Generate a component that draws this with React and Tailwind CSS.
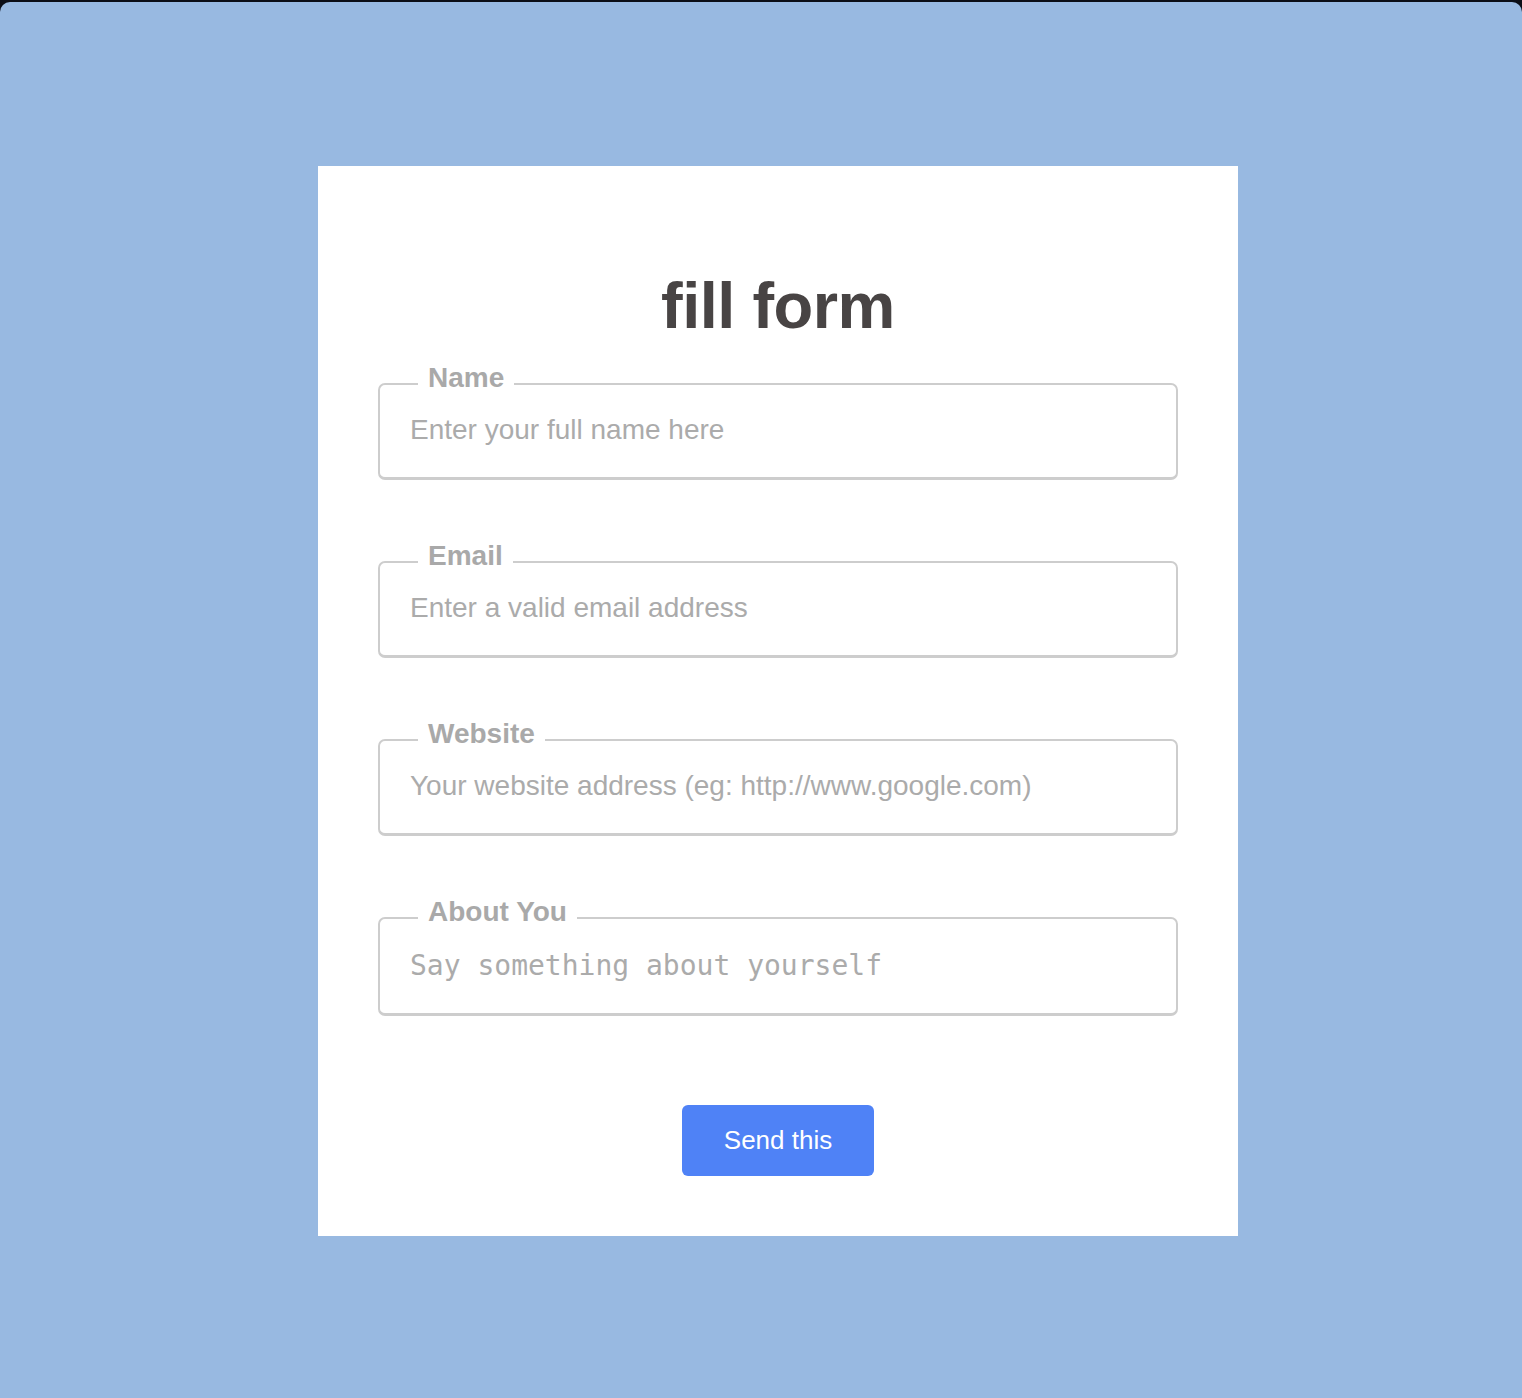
import React from 'react';

const fields = [
  { label: 'Name', placeholder: 'Enter your full name here', type: 'text' },
  { label: 'Email', placeholder: 'Enter a valid email address', type: 'email' },
  { label: 'Website', placeholder: 'Your website address (eg: http://www.google.com)', type: 'url' },
];

const Field = ({ label, children, last }) => (
  <fieldset
    className={`border-2 border-b-[3px] border-[#cdcdcd] rounded-[7px] px-[30px] pb-[18px] ${last ? '' : 'mb-[67px]'}`}
  >
    <legend className="ml-[8px] px-[10px] text-[28px] leading-[30px] font-bold text-[#a9a9a9]">
      <span className="relative -top-[6px]">{label}</span>
    </legend>
    {children}
  </fieldset>
);

const App = () => {
  return (
    <div className="h-[1398px] bg-[#0b0e16] pt-[2px] font-['Liberation_Sans',Arial,sans-serif]">
      <div className="h-[1396px] bg-[#98b9e1] rounded-t-[10px] pt-[164px] pl-[318px]">
        <div className="w-[920px] h-[1070px] bg-white px-[60px] pt-[104px]">
          <h1 className="text-center text-[65px] leading-[72px] font-bold text-[#484444] tracking-[-0.5px] mb-[27px]">
            fill form
          </h1>
          <form onSubmit={(e) => e.preventDefault()}>
            {fields.map((f) => (
              <Field key={f.label} label={f.label}>
                <input
                  type={f.type}
                  placeholder={f.placeholder}
                  className="mt-[2px] block w-full h-[58px] text-[28px] text-[#555] placeholder:text-[#ababab] outline-none bg-transparent"
                />
              </Field>
            ))}
            <Field label="About You" last>
              <textarea
                rows={1}
                placeholder="Say something about yourself"
                className="mt-[2px] block w-full h-[60px] pt-[14px] resize-none text-[28px] leading-[34px] font-['DejaVu_Sans_Mono',monospace] text-[#555] placeholder:text-[#ababab] outline-none bg-transparent"
              />
            </Field>
            <div className="flex justify-center mt-[89px]">
              <button
                type="submit"
                className="w-[192px] h-[71px] rounded-[6px] bg-[#4f82f6] text-white text-[26px]"
              >
                Send this
              </button>
            </div>
          </form>
        </div>
      </div>
    </div>
  );
};

export default App;
